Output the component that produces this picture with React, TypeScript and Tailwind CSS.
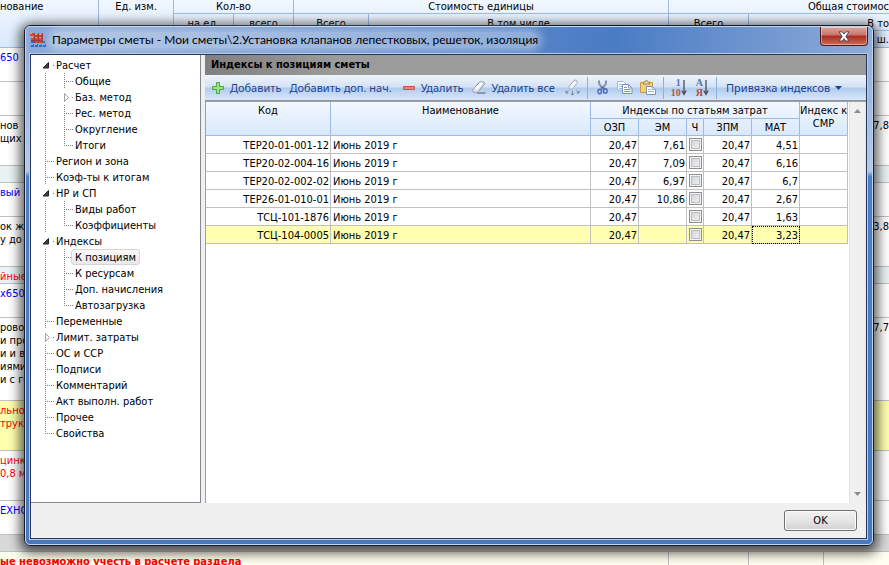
import { useState } from 'react';

type SheetRow = { lines: string[]; right?: string; height: string; tone: string; bg: string };

const sheetRows: SheetRow[] = [
  { lines: ['650'], height: 'h-[34px]', tone: 'text-[#0000ff]', bg: 'bg-white' },
  { lines: [], height: 'h-[34px]', tone: 'text-black', bg: 'bg-white' },
  { lines: ['нов', 'щих и'], right: '7,8', height: 'h-[50px]', tone: 'text-black', bg: 'bg-white' },
  { lines: [], height: 'h-[17px]', tone: 'text-black', bg: 'bg-[#e9f3f3]' },
  { lines: ['вый'], height: 'h-[34px]', tone: 'text-[#0000ff]', bg: 'bg-white' },
  { lines: ['ок жа', 'у до'], right: '3,8', height: 'h-[50px]', tone: 'text-black', bg: 'bg-white' },
  { lines: ['йные'], height: 'h-[17px]', tone: 'text-[#ff0000]', bg: 'bg-[#e9f3f3]' },
  { lines: ['х650'], height: 'h-[34px]', tone: 'text-[#0000ff]', bg: 'bg-white' },
  {
    lines: ['рово,', 'и про', 'и и в', 'иями', 'и с го'],
    right: '7,7',
    height: 'h-[83px]',
    tone: 'text-black',
    bg: 'bg-white',
  },
  { lines: ['льной', 'трукт'], height: 'h-[50px]', tone: 'text-[#ff0000]', bg: 'bg-[#ffffb0]' },
  { lines: ['цинк', '0,8 мм'], height: 'h-[50px]', tone: 'text-[#ff0000]', bg: 'bg-white' },
  { lines: ['ЕХНО'], height: 'h-[34px]', tone: 'text-[#0000ff]', bg: 'bg-white' },
  { lines: [], height: 'h-[17px]', tone: 'text-black', bg: 'bg-[#d9d9d9]' },
];

type TreeNode = { label: string; state?: 'open' | 'closed'; children?: TreeNode[] };

const tree: TreeNode[] = [
  {
    label: 'Расчет',
    state: 'open',
    children: [
      { label: 'Общие' },
      { label: 'Баз. метод', state: 'closed' },
      { label: 'Рес. метод' },
      { label: 'Округление' },
      { label: 'Итоги' },
    ],
  },
  { label: 'Регион и зона' },
  { label: 'Коэф-ты к итогам' },
  { label: 'НР и СП', state: 'open', children: [{ label: 'Виды работ' }, { label: 'Коэффициенты' }] },
  {
    label: 'Индексы',
    state: 'open',
    children: [
      { label: 'К позициям' },
      { label: 'К ресурсам' },
      { label: 'Доп. начисления' },
      { label: 'Автозагрузка' },
    ],
  },
  { label: 'Переменные' },
  { label: 'Лимит. затраты', state: 'closed' },
  { label: 'ОС и ССР' },
  { label: 'Подписи' },
  { label: 'Комментарий' },
  { label: 'Акт выполн. работ' },
  { label: 'Прочее' },
  { label: 'Свойства' },
];

const indexRows = [
  { code: 'ТЕР20-01-001-12', name: 'Июнь 2019 г', ozp: '20,47', em: '7,61', zpm: '20,47', mat: '4,51' },
  { code: 'ТЕР20-02-004-16', name: 'Июнь 2019 г', ozp: '20,47', em: '7,09', zpm: '20,47', mat: '6,16' },
  { code: 'ТЕР20-02-002-02', name: 'Июнь 2019 г', ozp: '20,47', em: '6,97', zpm: '20,47', mat: '6,7' },
  { code: 'ТЕР26-01-010-01', name: 'Июнь 2019 г', ozp: '20,47', em: '10,86', zpm: '20,47', mat: '2,67' },
  { code: 'ТСЦ-101-1876', name: 'Июнь 2019 г', ozp: '20,47', em: '', zpm: '20,47', mat: '1,63' },
  { code: 'ТСЦ-104-0005', name: 'Июнь 2019 г', ozp: '20,47', em: '', zpm: '20,47', mat: '3,23' },
];

function EstimateSheet() {
  const head = 'border-r border-b border-[#9ebbe6] p-0 text-center font-normal align-top';
  const sub = `${head} pt-[3px]`;
  return (
    <table className="w-full table-fixed border-separate border-spacing-0 text-[11px] leading-[13px]">
      <colgroup>
        <col className="w-[99px]" />
        <col className="w-[75px]" />
        <col className="w-[60px]" />
        <col className="w-[60px]" />
        <col className="w-[75px]" />
        <col />
        <col className="w-[80px]" />
        <col className="w-[75px]" />
        <col className="w-[65px]" />
      </colgroup>
      <thead className="bg-linear-to-b from-[#f1f7ff] to-[#d9e9fb]">
        <tr className="h-[14px]">
          <th rowSpan={3} className="border-r border-b border-[#9ebbe6] p-0 text-left align-top font-normal">
            нование
          </th>
          <th rowSpan={3} className={head}>Ед. изм.</th>
          <th colSpan={2} className={head}>Кол-во</th>
          <th colSpan={2} className={head}>Стоимость единицы</th>
          <th colSpan={3} className="overflow-hidden border-b border-[#9ebbe6] p-0 text-right font-normal whitespace-nowrap">
            Общая стоимос
          </th>
        </tr>
        <tr className="h-[17px]">
          <th rowSpan={2} className={sub}>на ед.</th>
          <th rowSpan={2} className={sub}>всего</th>
          <th rowSpan={2} className={sub}>Всего</th>
          <th className={sub}>В том числе</th>
          <th rowSpan={2} className={sub}>Всего</th>
          <th colSpan={2} className="border-b border-[#9ebbe6] p-0 pt-[3px] text-right font-normal">В то</th>
        </tr>
        <tr className="h-[17px]">
          <th className={head} />
          <th className={head} />
          <th className="border-b border-[#9ebbe6] p-0 text-right font-normal">ш.</th>
        </tr>
      </thead>
      <tbody>
        {sheetRows.map((row, i) => (
          <tr key={i} className={row.bg}>
            <td className={`border-b border-[#c0c0c0] p-0 align-top ${row.height} ${row.tone}`}>
              <div className="flex flex-col pt-[3px] whitespace-nowrap">
                {row.lines.map((line) => (
                  <span key={line}>{line}</span>
                ))}
              </div>
            </td>
            <td colSpan={7} className="border-b border-[#c0c0c0] p-0" />
            <td className="border-b border-[#c0c0c0] p-0 pt-[3px] text-right align-top">{row.right}</td>
          </tr>
        ))}
        <tr className="h-[34px] bg-[#ffffef]">
          <td colSpan={6} className="border-r border-[#c0c0c0] p-0 pt-[3px] align-top font-bold text-[#ff0000]">
            ые невозможно учесть в расчете раздела
          </td>
          <td className="border-r border-[#c0c0c0] p-0" />
          <td className="border-r border-[#c0c0c0] p-0" />
          <td className="p-0" />
        </tr>
      </tbody>
    </table>
  );
}

type GutterKind = 'tee' | 'end' | 'line' | 'open' | 'closed';

// One indent step of the tree: dotted guide lines or an expander arrow
function Gutter({ kind }: { kind: GutterKind }) {
  const guide = { stroke: '#808080', strokeDasharray: '1 1' };
  const isArrow = kind === 'open' || kind === 'closed';
  return (
    <svg width="19" height="16" viewBox="0 0 19 16" className="shrink-0" shapeRendering={isArrow ? 'auto' : 'crispEdges'}>
      {(kind === 'tee' || kind === 'line') && <path d="M8.5 0V16" {...guide} />}
      {kind === 'end' && <path d="M8.5 0V9" {...guide} />}
      {(kind === 'tee' || kind === 'end') && <path d="M10 8.5H17" {...guide} />}
      {kind === 'open' && <path d="M11.5 5.5V11H6Z" fill="#404040" stroke="#222" strokeWidth="1" />}
      {kind === 'closed' && <path d="M8.5 4.5V12.5L12.5 8.5Z" fill="#fff" stroke="#a0a0a0" />}
      {isArrow && <path d="M16 8.5H17" stroke="#808080" />}
    </svg>
  );
}

function TreeLabel({ label, selected, onSelect }: { label: string; selected: boolean; onSelect: (label: string) => void }) {
  return (
    <button
      type="button"
      onClick={() => onSelect(label)}
      className={
        selected
          ? '-ml-1 h-4 rounded-[3px] border border-[#d5d5d5] bg-linear-to-b from-[#fafafa] to-[#e8e8e8] px-[3px] leading-4 whitespace-nowrap'
          : 'h-4 leading-[18px] whitespace-nowrap'
      }
    >
      {label}
    </button>
  );
}

function SettingsTree() {
  const [selected, setSelected] = useState('К позициям');
  return (
    <nav className="w-[170px] shrink-0 overflow-hidden border-r border-b border-[#828790] bg-white pt-[2px] pl-[6px] text-[11px]">
      <ul>
        {tree.map((node, i) => {
          const last = i === tree.length - 1;
          return (
            <li key={node.label}>
              <div className="flex h-4">
                <Gutter kind={node.state ?? (last ? 'end' : 'tee')} />
                <TreeLabel label={node.label} selected={selected === node.label} onSelect={setSelected} />
              </div>
              {node.children && (
                <ul>
                  {node.children.map((child, j) => (
                    <li key={child.label} className="flex h-4">
                      <Gutter kind="line" />
                      <Gutter kind={child.state ?? (j === node.children!.length - 1 ? 'end' : 'tee')} />
                      <TreeLabel label={child.label} selected={selected === child.label} onSelect={setSelected} />
                    </li>
                  ))}
                </ul>
              )}
            </li>
          );
        })}
      </ul>
    </nav>
  );
}

// Red lattice on top of a blue stepped base
function AppIcon() {
  return (
    <svg width="16" height="16" viewBox="0 0 16 16" shapeRendering="crispEdges">
      <path d="M0 2h16v14H0z" fill="#7fa6e0" opacity=".4" />
      <path d="M0 1h4v3H0zM5 2h3v2H5zM9 2h3v2H9zM5 5h3v3H5zM9 5h3v3H9zM1 5h3v3H1zM5 9h3v2H5zM9 9h3v2H9z" fill="#e8421f" />
      <path d="M0 1h2v1H0zM5 2h2v1H5zM9 2h2v1H9zM5 5h2v1H5zM9 5h2v1H9zM1 5h2v1H1z" fill="#f79a7c" />
      <path d="M4 1h1v10H4zM8 1h1v10H8zM12 1h1v10h-1zM5 4h8v1H5zM1 8h12v1H1z" fill="#9c3a3c" />
      <path d="M1 9h3v2H1zM1 12h3v3H1zM5 12h3v3H5zM9 12h3v3H9zM13 12h3v3h-3zM13 9h2v2h-2z" fill="#2f6cc4" />
      <path d="M1 12h2v1H1zM5 12h2v1H5zM9 12h2v1H9zM13 12h2v1h-2z" fill="#8ab6ee" />
    </svg>
  );
}

function PlusIcon() {
  return (
    <svg width="12" height="12" viewBox="0 0 12 12">
      <path d="M4.5.5h3v4h4v3h-4v4h-3v-4h-4v-3h4z" fill="#9be57c" stroke="#4aa545" />
    </svg>
  );
}

function MinusIcon() {
  return (
    <svg width="12" height="4" viewBox="0 0 12 4">
      <path d="M.5.5h11v3H.5z" fill="#f2807a" stroke="#d0504c" />
    </svg>
  );
}

function EraserIcon() {
  return (
    <svg width="14" height="13" viewBox="0 0 14 13">
      <path d="M5 12h8.500" stroke="#4d5d73" />
      <path d="M.8 8.800 7.200 1.500Q8 .7 9.200.8l2.500.3q1.500.4.8 1.900L6.600 10.300Q5.800 11.300 4.800 11.300L2 11Q.3 10.500.8 8.800z" fill="#fff" stroke="#8592a6" />
      <path d="M1.200 8.500 5.200 9.300Q6.200 9.800 5.600 11M5.600 9.400 12 2" fill="none" stroke="#c3cad5" />
    </svg>
  );
}

function EraseSpreadIcon() {
  return (
    <svg width="15" height="17" viewBox="0 0 15 17">
      <path d="M4 7.600 8.800 1.600Q10.500.4 12 2q.8 1.200 0 2.200L7.400 9.700Q5.800 10.800 4.400 9.800 3.400 8.800 4 7.600z" fill="#fff" stroke="#98a2b2" />
      <path d="m4.500 7.500 2.500 2" stroke="#c3cad5" />
      <path d="M3.500 11.500 1 14M1 11.800V14h2.200M7.500 12v4M6 14.500l1.500 1.700L9 14.500M11.500 11.500 14 14M14 11.800V14h-2.200" fill="none" stroke="#75839a" />
    </svg>
  );
}

function ScissorsIcon() {
  return (
    <svg width="11" height="15" viewBox="0 0 11 15">
      <path d="M1.800.5 2.300 4 6.500 9.500M9.200.5 8.700 4 4.500 9.500" fill="none" stroke="#8592a6" strokeWidth="2" />
      <path d="M3.800 8.300 5.500 7.300 7.200 8.300" fill="none" stroke="#4a69b5" strokeWidth="1.500" />
      <ellipse cx="2.700" cy="11.500" rx="1.800" ry="2.200" fill="none" stroke="#4a69b5" strokeWidth="1.400" />
      <ellipse cx="8.300" cy="11" rx="1.800" ry="2.200" fill="none" stroke="#4a69b5" strokeWidth="1.400" />
    </svg>
  );
}

function CopyIcon() {
  return (
    <svg width="16" height="13" viewBox="0 0 16 13">
      <path d="M.5.5h6l2.500 2.500v6H.5z" fill="#fff" stroke="#a3b5d4" />
      <path d="M2 3.500h4M2 5.500h3M2 7.500h3" stroke="#9db5dd" />
      <path d="M5.500 3.500h6l3.500 3.500v5.500H5.500z" fill="#fff" stroke="#7590c2" />
      <path d="M11.500 3.500V7H15M7 6.500h3M7 8.500h6.500M7 10.500h6.500" fill="none" stroke="#7d9bd2" />
    </svg>
  );
}

function PasteIcon() {
  return (
    <svg width="16" height="15" viewBox="0 0 16 15">
      <path d="M.5 2.500h12v10H.5z" fill="#f6cf68" stroke="#c79a48" />
      <path d="M3.500 4h6V2H8L7.300.7H5.700L5 2H3.500z" fill="#e9d9b4" stroke="#a08457" />
      <path d="M6.500 6.500h5.500l3.500 3v5h-9z" fill="#fff" stroke="#8291ab" />
      <path d="M12 6.500V9.500h3.500M8 9.500h3M8 11.500h6" fill="none" stroke="#9db0d2" />
    </svg>
  );
}

function SortIcon({ top, bottom }: { top: string; bottom: string }) {
  return (
    <span className="flex items-center font-['Liberation_Serif',serif] text-[10px] leading-[10px] font-bold">
      <span className="flex flex-col items-end">
        <span className="text-[#5673b5]">{top}</span>
        <span className="text-[#b5504c]">{bottom}</span>
      </span>
      <svg width="6" height="16" viewBox="0 0 6 16">
        <path d="M3 0V14M.8 10.500 3 14.500 5.200 10.500" fill="none" stroke="#4c4c55" strokeWidth="1.300" />
      </svg>
    </span>
  );
}

function Toolbar() {
  return (
    <div className="flex h-[26px] items-center border-b border-[#8f959e] bg-[linear-gradient(to_bottom,#f0f4fa,#d4e2f4_48%,#b0cbed_52%,#d9e7f8)] pl-[7px] font-['Noto_Sans',sans-serif] text-[11px] leading-4 whitespace-nowrap text-[#1e4191]">
      <button type="button" className="flex items-center gap-[6px]">
        <PlusIcon />
        Добавить
      </button>
      <button type="button" className="ml-2">Добавить доп. нач.</button>
      <button type="button" className="ml-[11px] flex items-center gap-[6px]">
        <MinusIcon />
        Удалить
      </button>
      <button type="button" className="ml-2 flex items-center gap-[6px]">
        <EraserIcon />
        Удалить все
      </button>
      <button type="button" aria-label="Очистить" className="ml-[10px]"><EraseSpreadIcon /></button>
      <div className="ml-[7px] h-[22px] w-px bg-[#8eaedb]" />
      <button type="button" aria-label="Вырезать" className="ml-[9px]"><ScissorsIcon /></button>
      <button type="button" aria-label="Копировать" className="ml-[9px]"><CopyIcon /></button>
      <button type="button" aria-label="Вставить" className="ml-[7px]"><PasteIcon /></button>
      <div className="ml-[7px] h-[22px] w-px bg-[#8eaedb]" />
      <button type="button" aria-label="Сортировать по номеру" className="ml-[7px]"><SortIcon top="1" bottom="10" /></button>
      <button type="button" aria-label="Сортировать по алфавиту" className="ml-[9px]"><SortIcon top="А" bottom="Я" /></button>
      <div className="ml-[7px] h-[22px] w-px bg-[#8eaedb]" />
      <button type="button" className="ml-[9px] flex items-center gap-[5px]">
        Привязка индексов
        <svg width="7" height="4" viewBox="0 0 7 4">
          <path d="M0 0h7L3.500 4z" fill="#1e4191" />
        </svg>
      </button>
    </div>
  );
}

function IndexTable() {
  const head = 'border-r border-b border-[#9ebbe6] p-0 text-center font-normal';
  const cell = 'border-r border-b border-[#c0c0c0] p-0 px-px pt-[2px] text-right';
  return (
    <table className="w-full table-fixed border-separate border-spacing-0 text-[11px] leading-[13px]">
      <colgroup>
        <col className="w-[125px]" />
        <col />
        <col className="w-12" />
        <col className="w-12" />
        <col className="w-[17px]" />
        <col className="w-12" />
        <col className="w-12" />
        <col className="w-12" />
      </colgroup>
      <thead className="bg-linear-to-b from-[#f3f8ff] to-[#d7e8fb]">
        <tr className="h-[17px]">
          <th rowSpan={2} className={`${head} pt-[2px] align-top`}>Код</th>
          <th rowSpan={2} className={`${head} pt-[2px] align-top`}>Наименование</th>
          <th colSpan={5} className={head}>Индексы по статьям затрат</th>
          <th rowSpan={2} className={`${head} pt-[2px] align-top whitespace-nowrap`}>
            Индекс к
            <br />
            СМР
          </th>
        </tr>
        <tr className="h-[17px]">
          <th className={head}>ОЗП</th>
          <th className={head}>ЭМ</th>
          <th className={head}>Ч</th>
          <th className={head}>ЗПМ</th>
          <th className={head}>МАТ</th>
        </tr>
      </thead>
      <tbody>
        {indexRows.map((row, i) => {
          const current = i === indexRows.length - 1;
          return (
            <tr key={row.code} className={current ? 'h-[18px] bg-[#ffffb0]' : 'h-[18px] bg-white'}>
              <td className={cell}>{row.code}</td>
              <td className="border-r border-b border-[#c0c0c0] p-0 px-[2px] pt-[2px] text-left">{row.name}</td>
              <td className={cell}>{row.ozp}</td>
              <td className={cell}>{row.em}</td>
              <td className="border-r border-b border-[#c0c0c0] p-0">
                <input
                  type="checkbox"
                  aria-label={`Ч ${row.code}`}
                  className="mx-auto block size-[13px] appearance-none border border-[#8e8f8f] bg-linear-to-br from-[#cbcfd5] to-[#f6f6f6] shadow-[inset_0_0_0_1px_#f4f4f4,inset_0_0_0_2px_#b9bdc4] checked:bg-[#4a7cc4]"
                />
              </td>
              <td className={cell}>{row.zpm}</td>
              <td className={current ? `${cell} outline-1 -outline-offset-1 outline-black outline-dotted` : cell}>{row.mat}</td>
              <td className={cell} />
            </tr>
          );
        })}
      </tbody>
    </table>
  );
}

function TitleBar() {
  return (
    <header className="flex h-[26px] items-start justify-between bg-linear-to-r from-[#8daad8] via-[#4a7cc4] via-70% to-[#8daad8]">
      <div className="flex h-full items-center gap-[6px] pl-px">
        <AppIcon />
        <h1 className="rounded-full bg-white/35 font-['Lato',sans-serif] text-[12px] leading-4 whitespace-nowrap text-black shadow-[0_0_8px_4px_rgba(255,255,255,0.35)]">
          Параметры сметы - Мои сметы\2.Установка клапанов лепестковых, решеток, изоляция
        </h1>
      </div>
      <button
        type="button"
        aria-label="Закрыть"
        className="flex h-[19px] w-12 items-center justify-center rounded-b-[4px] border border-t-0 border-[#4a1a1c] bg-[linear-gradient(to_bottom,#dba79f,#c87468_45%,#a82c1e_50%,#cf6a56)] shadow-[inset_0_0_0_1px_rgba(255,255,255,0.4)]"
      >
        <svg width="12" height="11" viewBox="0 0 12 11">
          <path d="M1 .8h3.200L6 3.100 7.800.8H11L7.900 5.400 11 10H7.800L6 7.700 4.200 10H1l3.100-4.600z" fill="#fff" stroke="#4a4f5c" />
        </svg>
      </button>
    </header>
  );
}

export default function App() {
  return (
    <div className="relative h-screen overflow-hidden bg-white font-['DejaVu_Sans_Condensed','DejaVu_Sans',sans-serif] text-black">
      <EstimateSheet />

      {/* Estimate settings dialog */}
      <section
        role="dialog"
        aria-label="Параметры сметы"
        className="absolute top-[25px] right-[15px] bottom-[19px] left-6 flex rounded-[6px] border border-[#141c2c] bg-[linear-gradient(to_bottom,#8daad8,#b4c8e8_28%,#4d7fc8_29%,#4a78bd)] shadow-[0_3px_12px_4px_rgba(0,0,0,0.65)]"
      >
        <div className="flex min-w-0 grow flex-col rounded-[5px] border border-[#c3d6ef] pr-1 pb-1 pl-[3px]">
          <TitleBar />
          <div className="flex min-h-0 grow flex-col border border-[#b9cdea]">
            <div className="flex min-h-0 grow flex-col border border-[#27375c] bg-[#f0f0f0]">
              <div className="flex min-h-0 grow gap-1">
                <SettingsTree />
                <main className="flex min-w-0 grow flex-col">
                  <h2 className="h-5 bg-linear-to-r from-[#808080] to-[#9b9b9b] to-20% pl-[6px] text-[11px] leading-5 font-bold">
                    Индексы к позициям сметы
                  </h2>
                  <Toolbar />
                  <div className="flex min-h-0 grow border-t border-l border-[#a0a0a0] bg-white">
                    <div className="min-w-0 grow pr-px">
                      <IndexTable />
                    </div>
                    <div className="flex w-[17px] shrink-0 flex-col items-center justify-between border-x border-[#e3e3e3] bg-[#f0f0f0] py-[7px]">
                      <svg width="7" height="4" viewBox="0 0 7 4">
                        <path d="M0 4h7L3.500 0z" fill="#8c8c8c" />
                      </svg>
                      <svg width="7" height="4" viewBox="0 0 7 4">
                        <path d="M0 0h7L3.500 4z" fill="#8c8c8c" />
                      </svg>
                    </div>
                  </div>
                </main>
              </div>
              <footer className="flex h-[35px] shrink-0 items-start justify-end pt-[7px] pr-[9px]">
                <button
                  type="button"
                  className="h-[21px] w-[73px] rounded-[3px] border border-[#707070] bg-linear-to-b from-[#f2f2f2] via-[#e6e6e6] to-[#cfcfcf] text-[11px] leading-[19px] shadow-[inset_0_0_0_1px_#fcfcfc]"
                >
                  OK
                </button>
              </footer>
            </div>
          </div>
        </div>
      </section>
    </div>
  );
}
